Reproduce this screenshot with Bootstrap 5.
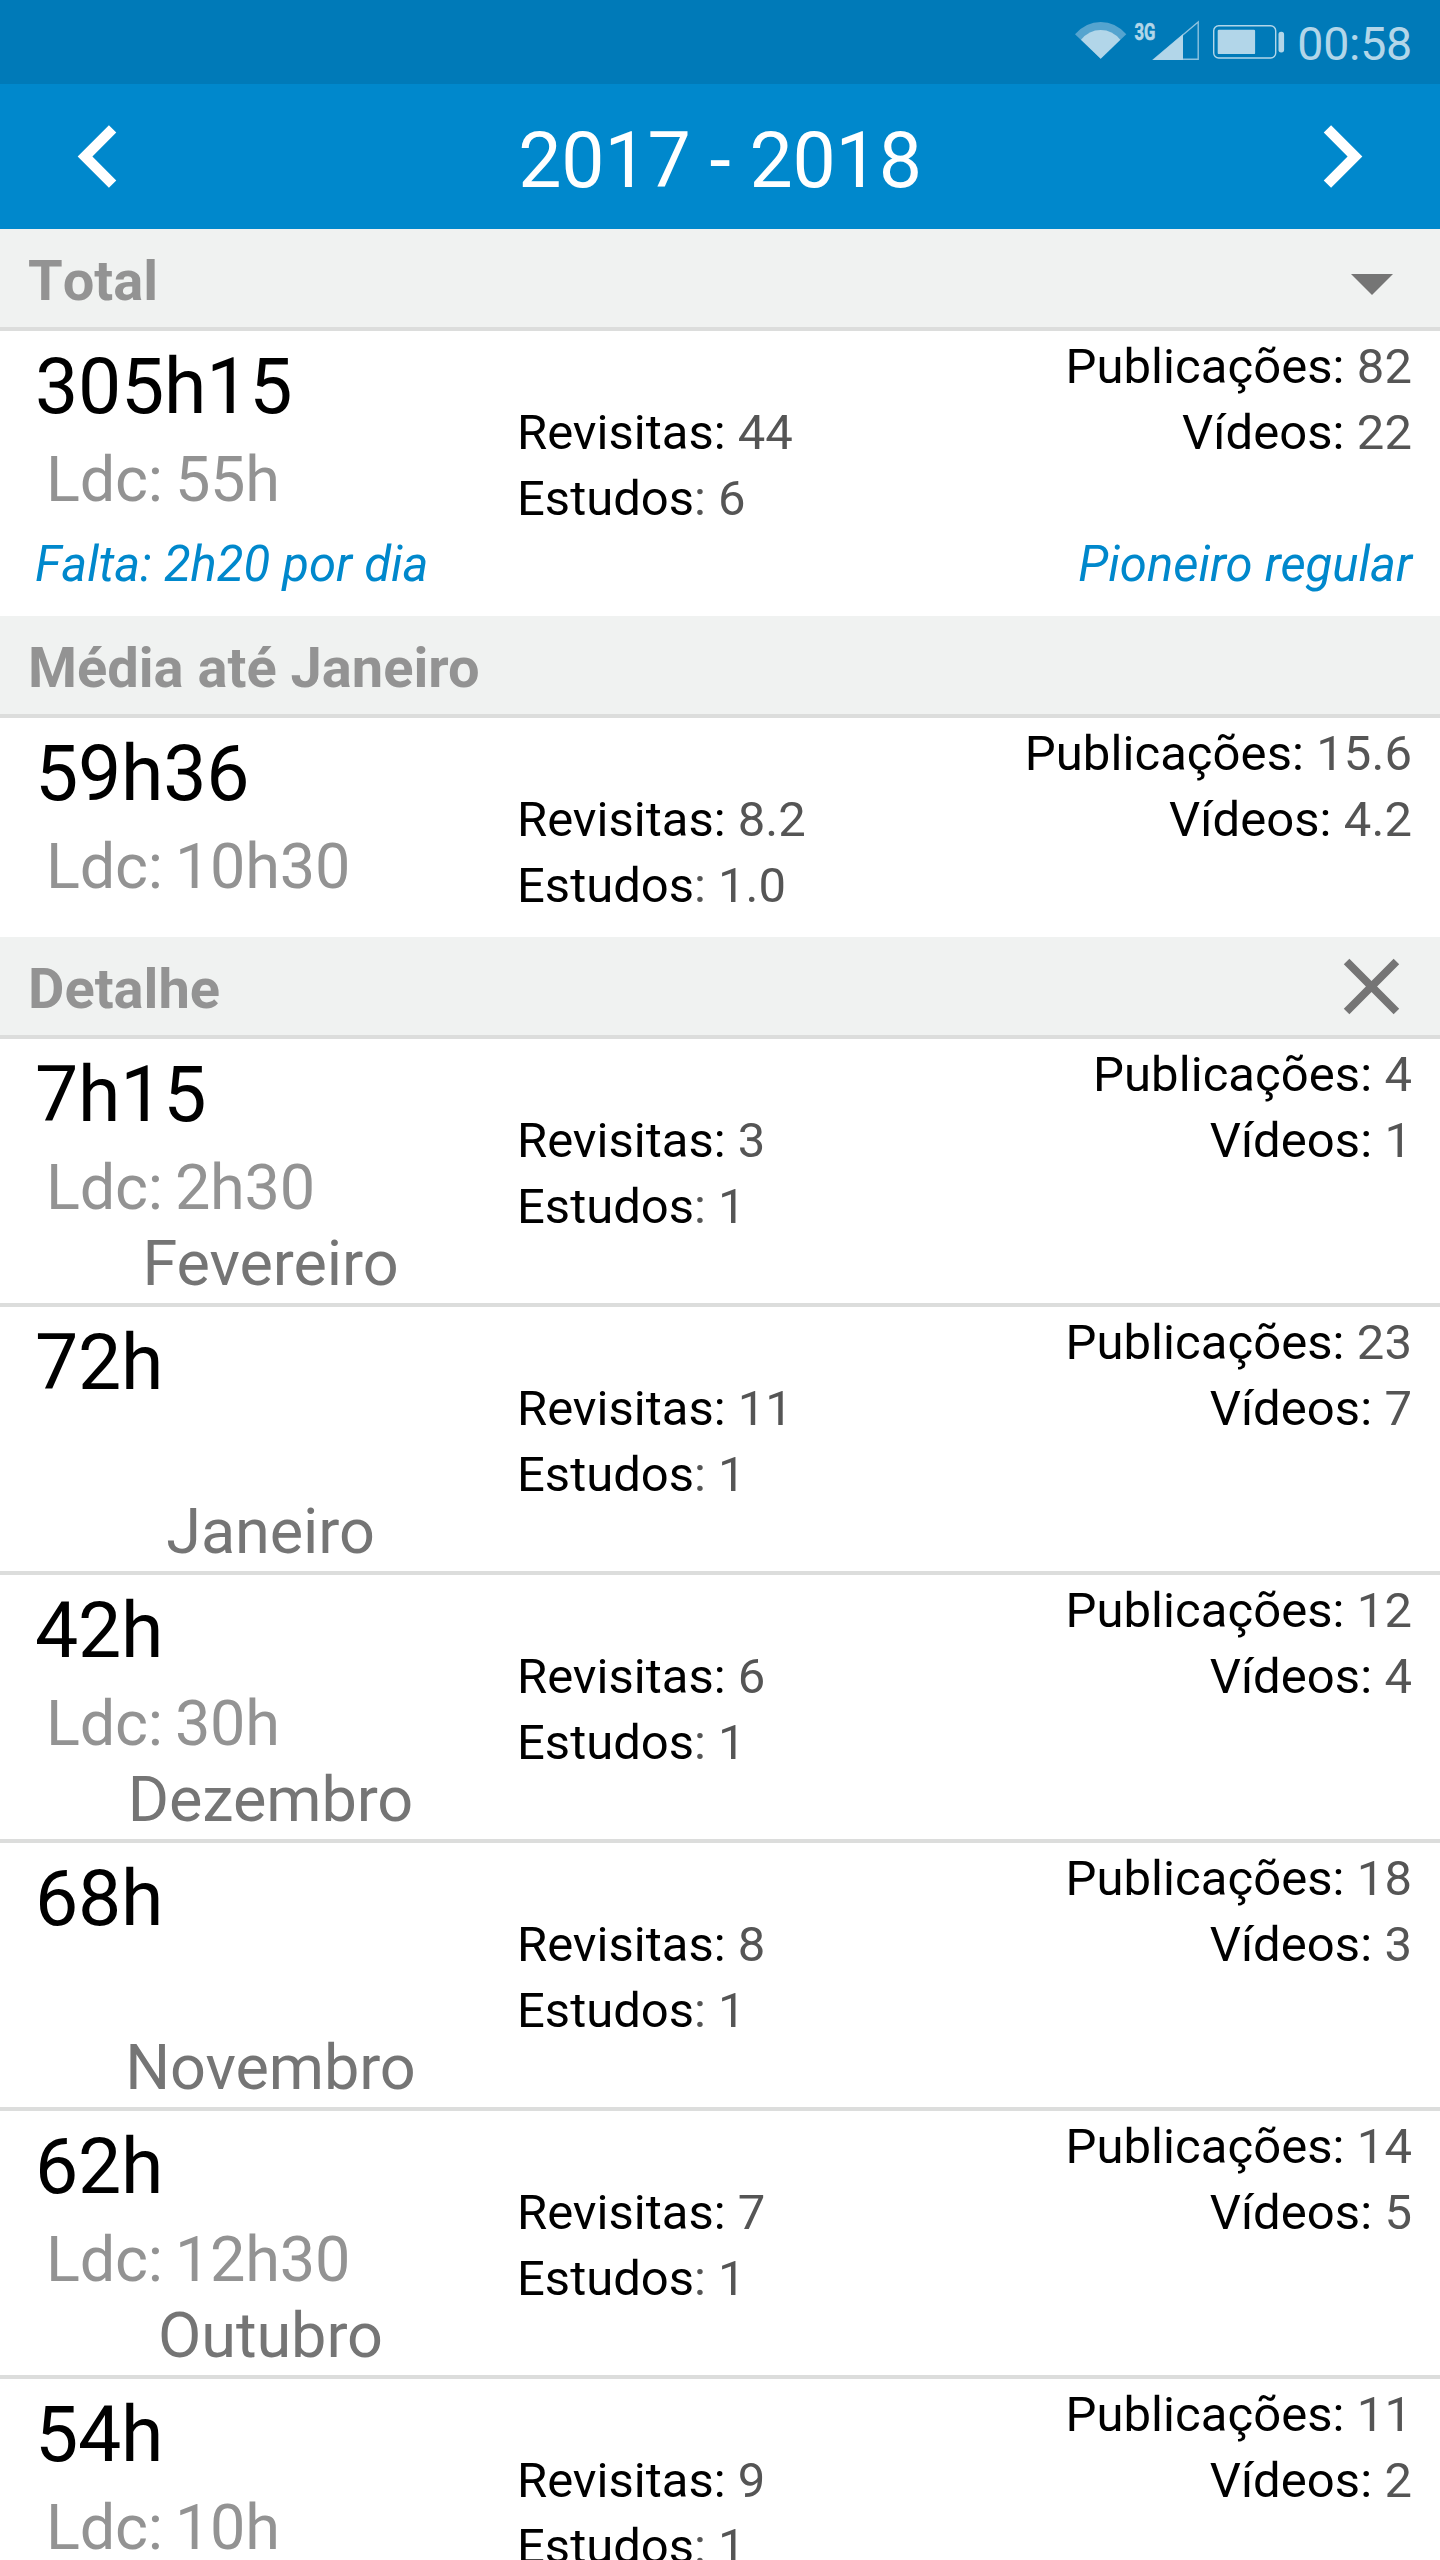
<!DOCTYPE html>
<html lang="pt">
<head>
<meta charset="utf-8">
<meta name="viewport" content="width=device-width, initial-scale=1">
<title>2017 - 2018</title>
<link rel="stylesheet" href="https://cdn.jsdelivr.net/npm/bootstrap@5.3.0/dist/css/bootstrap.min.css">
<style>
  body { font-family: Roboto, sans-serif; font-size: 49px; line-height: 66px; color: #000; background: #fff; height: 2560px; overflow: hidden; }
  svg { display: block; flex: none; }
  .status-bar { height: 84px; background: #007ab8; color: #b2d6e9; padding-right: 28px; }
  .clock { font-size: 46.5px; line-height: 56px; padding-top: 16px; margin-left: 11px; letter-spacing: -.2px; }
  .year-bar { height: 145px; background: #0088cc; padding: 0 36px; }
  .year-bar h1 { font-size: 77px; line-height: 90px; padding-top: 8px; letter-spacing: -.2px; }
  .year-bar button { width: 125px; height: 125px; }
  .section-head { height: 102px; background: #f0f2f1; border-bottom: 4px solid #dcdddc; padding: 0 28px; color: #939393; }
  .section-head h2 { font-size: 56px; line-height: 66px; padding-top: 6px; }
  .section-head .fold { margin-right: 19px; margin-top: 12px; }
  .section-head .shut { margin-right: -7px; margin-top: 1px; }
  .loose { font-kerning: none; }
  .entry { padding-right: 28px; }
  .entry-total { height: 285px; }
  .entry-mean { height: 219px; }
  .entry-month { height: 268px; border-bottom: 4px solid #dcdddc; }
  .col-hours { width: 517px; padding: 11px 4px 0 28px; }
  .hours { font-size: 77px; line-height: 90px; padding-left: 7px; letter-spacing: -.25px; }
  .ldc { font-size: 63px; line-height: 74px; height: 74px; margin-top: 11px; padding-left: 18px; color: #939393; letter-spacing: -.2px; }
  .ldc span { margin-left: 12px; }
  .month-name { font-size: 63px; line-height: 74px; margin-top: 2px; color: #757575; letter-spacing: -.1px; }
  .col-visits { padding-top: 69px; }
  .col-media { padding-top: 3px; letter-spacing: .07px; }
  .val { color: #555; }
  .goal { color: #0088cc; line-height: 57px; padding-left: 35px; padding-bottom: 23px; }
</style>
</head>
<body>
<header>
  <div class="status-bar d-flex justify-content-end">
    <svg width="56" height="84" viewBox="1074 0 56 84"><path d="M1101.7 58.8 1076 34.2Q1087 22 1101.7 22T1127.3 34.2Z" fill="#55a4cf"/><path d="M1101.7 58.8 1082 39.8Q1090 30 1101.7 30T1121.3 39.8Z" fill="#b2d6e9"/></svg>
    <svg width="82" height="84" viewBox="1130 0 82 84"><text x="1135.5" y="40.2" font-size="24" font-weight="700" textLength="21" lengthAdjust="spacingAndGlyphs" fill="#b2d6e9" stroke="#b2d6e9" stroke-width=".6">3G</text><path d="M1155 59.3 1199.2 22V59.3Z" fill="none" stroke="#8cc2df" stroke-width="1.4"/><path d="M1153.8 60 1184 34.3V60Z" fill="#b2d6e9"/></svg>
    <svg width="75" height="84" viewBox="1212 0 75 84"><rect x="1214.7" y="25.7" width="62" height="32.3" rx="5" fill="none" stroke="#b2d6e9" stroke-width="1.4"/><rect x="1218.7" y="29.8" width="37.4" height="24.3" rx="1.2" fill="#b2d6e9"/><rect x="1279.5" y="31.8" width="5.6" height="20.6" rx="2.6" fill="#b2d6e9"/></svg>
    <div class="clock">00:58</div>
  </div>
  <nav class="year-bar d-flex justify-content-between align-items-center text-white">
    <button class="btn p-0 border-0" aria-label="Anterior"><svg width="125" height="125" viewBox="0 0 24 24" fill="#fff"><path d="M15.41 7.41 14 6l-6 6 6 6 1.41-1.41L10.83 12z"/></svg></button>
    <h1 class="m-0 fw-normal">2017 - 2018</h1>
    <button class="btn p-0 border-0" aria-label="Seguinte"><svg width="125" height="125" viewBox="0 0 24 24" fill="#fff"><path d="M10 6 8.59 7.41 13.17 12l-4.58 4.59L10 18l6-6z"/></svg></button>
  </nav>
</header>
<main>
  <section>
    <div class="section-head d-flex justify-content-between align-items-center">
      <h2 class="m-0 fw-bold loose">Total</h2>
      <svg class="fold" width="42" height="21" viewBox="0 0 42 21"><path d="M0 0H42L21 21Z" fill="#757575"/></svg>
    </div>
    <div class="entry-total d-flex flex-column justify-content-between">
      <div class="entry d-flex">
        <div class="col-hours"><div class="hours">305h15</div><div class="ldc">Ldc:<span>55h</span></div></div>
        <div class="col-visits"><div>Revisitas: <span class="val">44</span></div><div>Estudos<span class="val">: 6</span></div></div>
        <div class="col-media ms-auto text-end"><div>Publicações: <span class="val">82</span></div><div>Vídeos: <span class="val">22</span></div></div>
      </div>
      <div class="entry goal d-flex justify-content-between fst-italic"><span class="loose">Falta: 2h20 por dia</span><span>Pioneiro regular</span></div>
    </div>
  </section>
  <section>
    <div class="section-head d-flex align-items-center"><h2 class="m-0 fw-bold">Média até Janeiro</h2></div>
    <div class="entry entry-mean d-flex">
      <div class="col-hours"><div class="hours">59h36</div><div class="ldc">Ldc:<span>10h30</span></div></div>
      <div class="col-visits"><div>Revisitas: <span class="val">8.2</span></div><div>Estudos<span class="val">: 1.0</span></div></div>
      <div class="col-media ms-auto text-end"><div>Publicações: <span class="val">15.6</span></div><div>Vídeos: <span class="val">4.2</span></div></div>
    </div>
  </section>
  <section>
    <div class="section-head d-flex justify-content-between align-items-center">
      <h2 class="m-0 fw-bold">Detalhe</h2>
      <svg class="shut" width="95" height="95" viewBox="0 0 24 24"><path d="M19 6.41 17.59 5 12 10.59 6.41 5 5 6.41 10.59 12 5 17.59 6.41 19 12 13.41 17.59 19 19 17.59 13.41 12z" fill="#757575"/></svg>
    </div>
    <ul class="list-unstyled m-0">
      <li class="entry entry-month d-flex">
        <div class="col-hours"><div class="hours">7h15</div><div class="ldc">Ldc:<span>2h30</span></div><div class="month-name text-center">Fevereiro</div></div>
        <div class="col-visits"><div>Revisitas: <span class="val">3</span></div><div>Estudos<span class="val">: 1</span></div></div>
        <div class="col-media ms-auto text-end"><div>Publicações: <span class="val">4</span></div><div>Vídeos: <span class="val">1</span></div></div>
      </li>
      <li class="entry entry-month d-flex">
        <div class="col-hours"><div class="hours">72h</div><div class="ldc"></div><div class="month-name text-center">Janeiro</div></div>
        <div class="col-visits"><div>Revisitas: <span class="val">11</span></div><div>Estudos<span class="val">: 1</span></div></div>
        <div class="col-media ms-auto text-end"><div>Publicações: <span class="val">23</span></div><div>Vídeos: <span class="val">7</span></div></div>
      </li>
      <li class="entry entry-month d-flex">
        <div class="col-hours"><div class="hours">42h</div><div class="ldc">Ldc:<span>30h</span></div><div class="month-name text-center">Dezembro</div></div>
        <div class="col-visits"><div>Revisitas: <span class="val">6</span></div><div>Estudos<span class="val">: 1</span></div></div>
        <div class="col-media ms-auto text-end"><div>Publicações: <span class="val">12</span></div><div>Vídeos: <span class="val">4</span></div></div>
      </li>
      <li class="entry entry-month d-flex">
        <div class="col-hours"><div class="hours">68h</div><div class="ldc"></div><div class="month-name text-center">Novembro</div></div>
        <div class="col-visits"><div>Revisitas: <span class="val">8</span></div><div>Estudos<span class="val">: 1</span></div></div>
        <div class="col-media ms-auto text-end"><div>Publicações: <span class="val">18</span></div><div>Vídeos: <span class="val">3</span></div></div>
      </li>
      <li class="entry entry-month d-flex">
        <div class="col-hours"><div class="hours">62h</div><div class="ldc">Ldc:<span>12h30</span></div><div class="month-name text-center">Outubro</div></div>
        <div class="col-visits"><div>Revisitas: <span class="val">7</span></div><div>Estudos<span class="val">: 1</span></div></div>
        <div class="col-media ms-auto text-end"><div>Publicações: <span class="val">14</span></div><div>Vídeos: <span class="val">5</span></div></div>
      </li>
      <li class="entry entry-month d-flex">
        <div class="col-hours"><div class="hours">54h</div><div class="ldc">Ldc:<span>10h</span></div></div>
        <div class="col-visits"><div>Revisitas: <span class="val">9</span></div><div>Estudos<span class="val">: 1</span></div></div>
        <div class="col-media ms-auto text-end"><div>Publicações: <span class="val">11</span></div><div>Vídeos: <span class="val">2</span></div></div>
      </li>
    </ul>
  </section>
</main>
<script src="https://cdn.jsdelivr.net/npm/bootstrap@5.3.0/dist/js/bootstrap.bundle.min.js"></script>
</body>
</html>
